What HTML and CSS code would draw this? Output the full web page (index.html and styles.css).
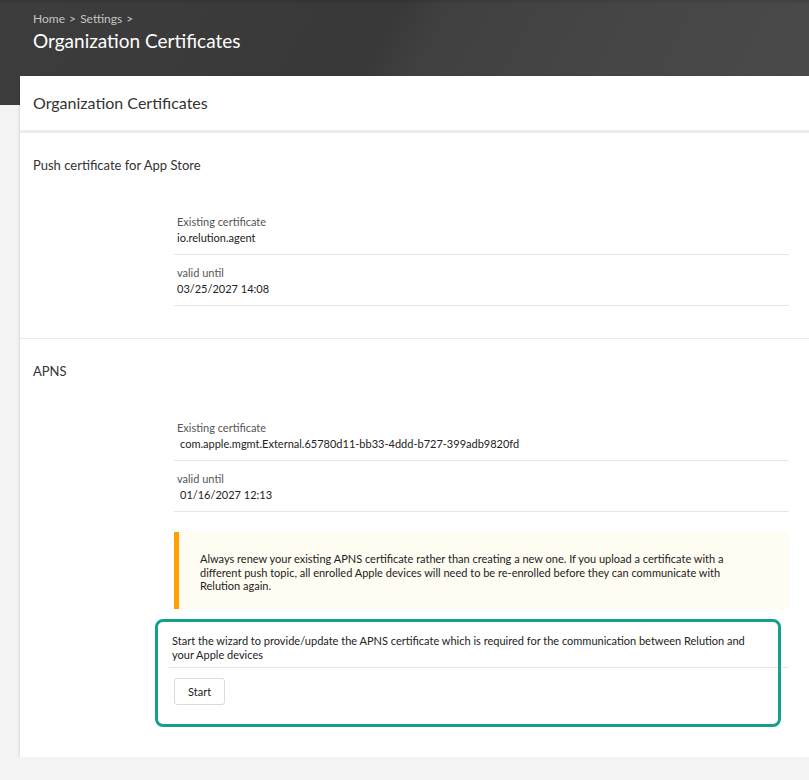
FILE: index.html
```html
<!DOCTYPE html>
<html lang="en">
  <head>
    <meta charset="UTF-8" />
    <meta name="viewport" content="width=device-width, initial-scale=1.0" />
    <title>Organization Certificates</title>
    <link rel="stylesheet" href="styles.css">
  </head>
  <body>
    <header class="page-header">
      <div class="breadcrumb">
        <a href="#">Home</a> <span class="sep">&gt;</span>
        <a href="#">Settings</a> <span class="sep">&gt;</span>
      </div>
      <h1>Organization Certificates</h1>
    </header>

    <main class="card">
      <div class="card-header">Organization Certificates</div>

      <section class="cert-section">
        <h2>Push certificate for App Store</h2>
        <ul class="cert-list">
          <li>
            <div class="label">Existing certificate</div>
            <div class="value">io.relution.agent</div>
          </li>
          <li>
            <div class="label">valid until</div>
            <div class="value">03/25/2027 14:08</div>
          </li>
        </ul>
      </section>

      <section class="cert-section last">
        <h2>APNS</h2>
        <ul class="cert-list">
          <li>
            <div class="label">Existing certificate</div>
            <div class="value indent">com.apple.mgmt.External.65780d11-bb33-4ddd-b727-399adb9820fd</div>
          </li>
          <li>
            <div class="label">valid until</div>
            <div class="value indent">01/16/2027 12:13</div>
          </li>
        </ul>

        <div class="warning">
          Always renew your existing APNS certificate rather than creating a new one. If you upload a certificate with a
          different push topic, all enrolled Apple devices will need to be re-enrolled before they can communicate with
          Relution again.
        </div>

        <div class="wizard">
          <p class="wizard-text">
            Start the wizard to provide/update the APNS certificate which is required for the communication between Relution and
            your Apple devices
          </p>
          <button class="btn">Start</button>
          <div class="highlight"></div>
        </div>
      </section>
    </main>
  </body>
</html>
```

FILE: styles.css
```css
body {
  margin: 0;
  font-family: Lato, "Open Sans", sans-serif;
  background-color: #f3f3f3;
  color: #222;
  overflow: hidden;
}
.page-header {
  box-sizing: border-box;
  height: 105px;
  padding: 11px 33px 0 33px;
  background:
    linear-gradient(180deg, rgba(0, 0, 0, 0.12) 0px, rgba(0, 0, 0, 0) 4px),
    linear-gradient(118deg, #3d3d3d 0%, #3a3a3a 30%, #383838 46%, #404040 52%, #464646 75%, #4a4a4a 100%);
}
.breadcrumb {
  font-size: 12px;
  color: #c4c4c4;
  line-height: 16px;
}
.breadcrumb a {
  color: #c4c4c4;
  text-decoration: none;
}
.breadcrumb .sep {
  margin: 0 1px;
}
.page-header h1 {
  margin: 1px 0 0 0;
  font-size: 19px;
  font-weight: 400;
  color: #ffffff;
  line-height: 26px;
}
.card {
  position: relative;
  margin: -29px 0 0 20px;
  background-color: #fff;
  box-shadow: 0 1px 3px rgba(0, 0, 0, 0.2);
}
.card-header {
  height: 54px;
  line-height: 54px;
  padding-left: 13px;
  font-size: 16px;
  color: #333;
  border-bottom: 3px solid #ececec;
}
.cert-section {
  padding: 23px 0 32px 0;
  border-bottom: 1px solid #eaeaea;
}
.cert-section.last {
  border-bottom: none;
  padding-bottom: 52px;
}
.cert-section h2 {
  margin: 0 0 30px 13px;
  font-size: 13px;
  font-weight: 400;
  line-height: 18px;
  color: #333;
}
.cert-list {
  list-style: none;
  margin: 0 0 0 154px;
  padding: 0;
  width: 615px;
}
.cert-list li {
  padding: 10px 3px 8px 3px;
  border-bottom: 1px solid #e6e6e6;
}
.label {
  font-size: 11px;
  line-height: 16px;
  color: #555;
}
.value {
  font-size: 11px;
  line-height: 16px;
  color: #222;
}
.value.indent {
  padding-left: 3px;
}
.warning {
  margin: 20px 0 0 154px;
  width: 615px;
  box-sizing: border-box;
  padding: 20px 30px 16px 21px;
  border-left: 5px solid #ffa000;
  background-color: #fffcf2;
  font-size: 11px;
  line-height: 13.5px;
  color: #222;
}
.wizard {
  position: relative;
  margin: 24px 0 0 149px;
  width: 620px;
}
.wizard-text {
  margin: 0;
  padding: 1px 22px 5px 3px;
  font-size: 11px;
  line-height: 14px;
  border-bottom: 1px solid #e6e6e6;
}
.btn {
  display: block;
  margin: 10px 0 0 5px;
  height: 27px;
  padding: 0 13px;
  font-family: inherit;
  font-size: 11px;
  color: #222;
  background-color: #fff;
  border: 1px solid #dcdcdc;
  border-radius: 3px;
  cursor: pointer;
}
.highlight {
  position: absolute;
  left: -14px;
  right: 8px;
  top: -14px;
  bottom: -22px;
  border: 3px solid #14a08a;
  border-radius: 8px;
  pointer-events: none;
}
```
